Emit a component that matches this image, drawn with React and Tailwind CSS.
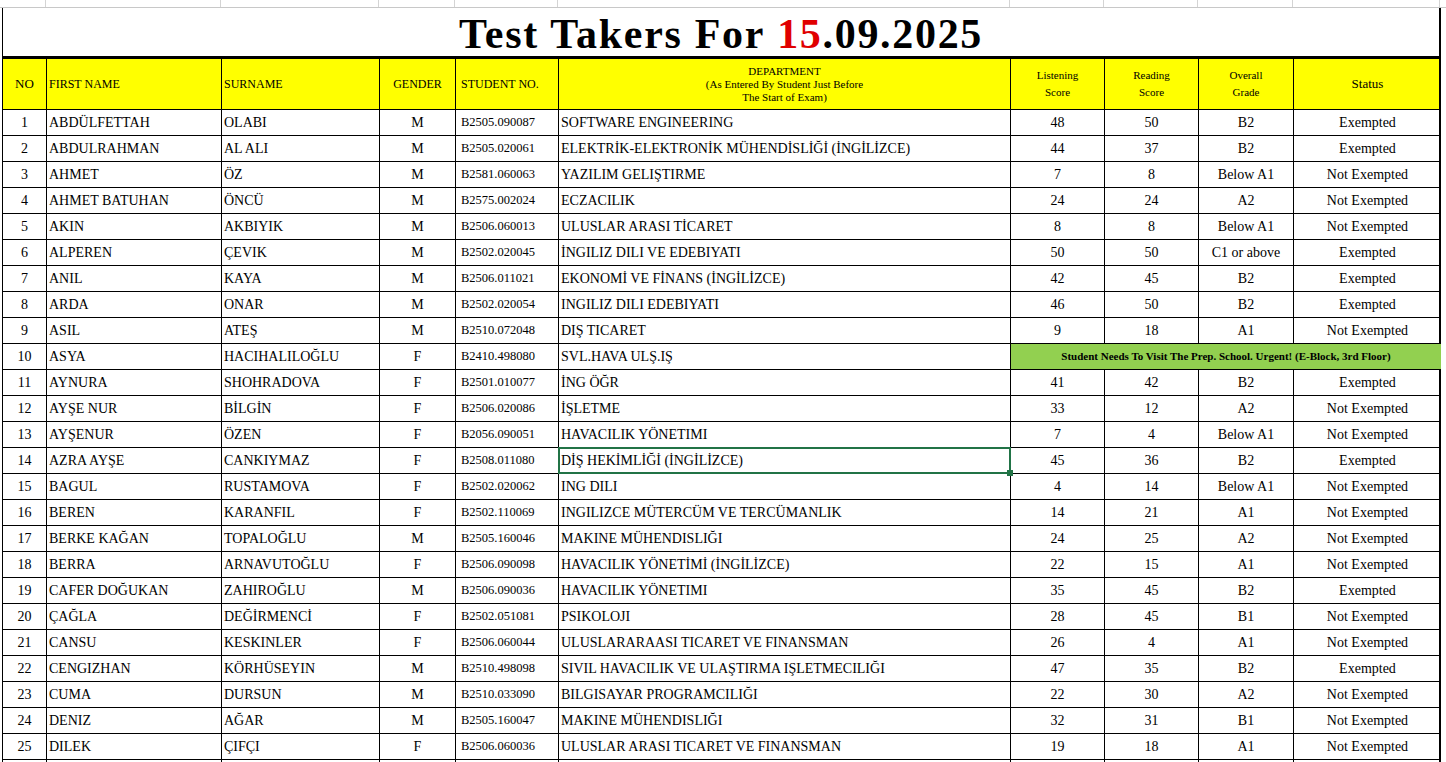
const rows = [
["1","ABDÜLFETTAH","OLABI","M","B2505.090087","SOFTWARE ENGINEERING","48","50","B2","Exempted"],
["2","ABDULRAHMAN","AL  ALI","M","B2505.020061","ELEKTRİK-ELEKTRONİK MÜHENDİSLİĞİ (İNGİLİZCE)","44","37","B2","Exempted"],
["3","AHMET","ÖZ","M","B2581.060063","YAZILIM GELIŞTIRME","7","8","Below A1","Not Exempted"],
["4","AHMET BATUHAN","ÖNCÜ","M","B2575.002024","ECZACILIK","24","24","A2","Not Exempted"],
["5","AKIN","AKBIYIK","M","B2506.060013","ULUSLAR ARASI TİCARET","8","8","Below A1","Not Exempted"],
["6","ALPEREN","ÇEVIK","M","B2502.020045","İNGILIZ DILI VE EDEBIYATI","50","50","C1 or above","Exempted"],
["7","ANIL","KAYA","M","B2506.011021","EKONOMİ VE FİNANS (İNGİLİZCE)","42","45","B2","Exempted"],
["8","ARDA","ONAR","M","B2502.020054","INGILIZ DILI EDEBIYATI","46","50","B2","Exempted"],
["9","ASIL","ATEŞ","M","B2510.072048","DIŞ TICARET","9","18","A1","Not Exempted"],
["10","ASYA","HACIHALILOĞLU","F","B2410.498080","SVL.HAVA ULŞ.IŞ","","","",""],
["11","AYNURA","SHOHRADOVA","F","B2501.010077","İNG ÖĞR","41","42","B2","Exempted"],
["12","AYŞE NUR","BİLGİN","F","B2506.020086","İŞLETME","33","12","A2","Not Exempted"],
["13","AYŞENUR","ÖZEN","F","B2056.090051","HAVACILIK YÖNETIMI","7","4","Below A1","Not Exempted"],
["14","AZRA AYŞE","CANKIYMAZ","F","B2508.011080","DİŞ HEKİMLİĞİ (İNGİLİZCE)","45","36","B2","Exempted"],
["15","BAGUL","RUSTAMOVA","F","B2502.020062","ING DILI","4","14","Below A1","Not Exempted"],
["16","BEREN","KARANFIL","F","B2502.110069","INGILIZCE MÜTERCÜM VE TERCÜMANLIK","14","21","A1","Not Exempted"],
["17","BERKE KAĞAN","TOPALOĞLU","M","B2505.160046","MAKINE MÜHENDISLIĞI","24","25","A2","Not Exempted"],
["18","BERRA","ARNAVUTOĞLU","F","B2506.090098","HAVACILIK YÖNETİMİ (İNGİLİZCE)","22","15","A1","Not Exempted"],
["19","CAFER DOĞUKAN","ZAHIROĞLU","M","B2506.090036","HAVACILIK YÖNETIMI","35","45","B2","Exempted"],
["20","ÇAĞLA","DEĞİRMENCİ","F","B2502.051081","PSIKOLOJI","28","45","B1","Not Exempted"],
["21","CANSU","KESKINLER","F","B2506.060044","ULUSLARARAASI TICARET VE FINANSMAN","26","4","A1","Not Exempted"],
["22","CENGIZHAN","KÖRHÜSEYIN","M","B2510.498098","SIVIL HAVACILIK VE ULAŞTIRMA IŞLETMECILIĞI","47","35","B2","Exempted"],
["23","CUMA","DURSUN","M","B2510.033090","BILGISAYAR PROGRAMCILIĞI","22","30","A2","Not Exempted"],
["24","DENIZ","AĞAR","M","B2505.160047","MAKINE MÜHENDISLIĞI","32","31","B1","Not Exempted"],
["25","DILEK","ÇIFÇI","F","B2506.060036","ULUSLAR ARASI TICARET VE FINANSMAN","19","18","A1","Not Exempted"],
["","","","","","","","","",""],
];
const cols = "grid-cols-[44px_175px_158px_76px_103px_452px_94px_94px_95px_147px]";
const align = ["justify-center","","","justify-center","","","justify-center","justify-center","justify-center","justify-center"];

export default function App() {
  return (
    <div className="w-[1446px] h-[762px] overflow-hidden bg-white text-black" style={{fontFamily:'"Liberation Serif", serif'}}>
      <div className="h-[8px] flex border-b border-[#c8c8c8]">
        {[46,221,379,455,558,1010,1104,1198,1293,1440].map((x,i,a)=>(
          <div key={i} className="h-full border-r border-[#d4d4d4]" style={{width: x-(i?a[i-1]:0)}} />
        ))}
      </div>
      <div className="ml-[2px] w-[1439px] border-l border-r-2 border-black">
        <div className="h-[51px] flex items-center justify-center border-b-[3px] border-black text-[42px] font-bold leading-none tracking-[0.04em] pt-1">
          Test Takers For&nbsp;<span className="text-[#e00000]">15</span>.09.2025
        </div>
        <div className={`grid ${cols} bg-[#ffff00] h-[51px] text-[12px]`}>
          <div className="border-r border-b border-black flex items-center justify-center text-[13px]">NO</div>
          <div className="border-r border-b border-black flex items-center px-[2px]">FIRST NAME</div>
          <div className="border-r border-b border-black flex items-center px-[2px]">SURNAME</div>
          <div className="border-r border-b border-black flex items-center justify-center">GENDER</div>
          <div className="border-r border-b border-black flex items-center px-[5px]">STUDENT NO.</div>
          <div className="border-r border-b border-black flex flex-col items-center justify-center text-[11px] leading-[13px]"><span>DEPARTMENT</span><span>(As Entered By Student Just Before</span><span>The Start of Exam)</span></div>
          <div className="border-r border-b border-black flex flex-col items-center justify-center text-[11px] leading-[17px]"><span>Listening</span><span>Score</span></div>
          <div className="border-r border-b border-black flex flex-col items-center justify-center text-[11px] leading-[17px]"><span>Reading</span><span>Score</span></div>
          <div className="border-r border-b border-black flex flex-col items-center justify-center text-[11px] leading-[17px]"><span>Overall</span><span>Grade</span></div>
          <div className="border-b border-black flex items-center justify-center text-[13px]">Status</div>
        </div>
        {rows.map((r,ri)=>(
          <div key={ri} className={`grid ${cols} h-[26px] text-[14px]`}>
            {r.map((c,ci)=>{
              if (ri===9 && ci>=6) {
                if (ci>6) return null;
                return <div key={ci} className="col-span-4 border-b border-black bg-[#92d050] flex items-center justify-center text-[11px] font-bold">Student Needs To Visit The Prep. School. Urgent! (E-Block, 3rd Floor)</div>;
              }
              const sel = ri===13 && ci===5;
              return (
                <div key={ci} className={`relative ${ci<9?"border-r":""} border-b border-black flex items-center whitespace-nowrap ${sel?"overflow-visible z-10":"overflow-hidden"} ${align[ci]} ${ci===4?"px-[5px] text-[12.5px]":"px-[2px]"}`}>
                  {c}
                  {sel && <div className="absolute top-[-1px] left-[-1px] right-[-1px] bottom-[-1px] border-2 border-[#217346]"><div className="absolute right-[-4px] bottom-[-4px] w-[6px] h-[6px] bg-[#217346]"/></div>}
                </div>
              );
            })}
          </div>
        ))}
      </div>
    </div>
  );
}
